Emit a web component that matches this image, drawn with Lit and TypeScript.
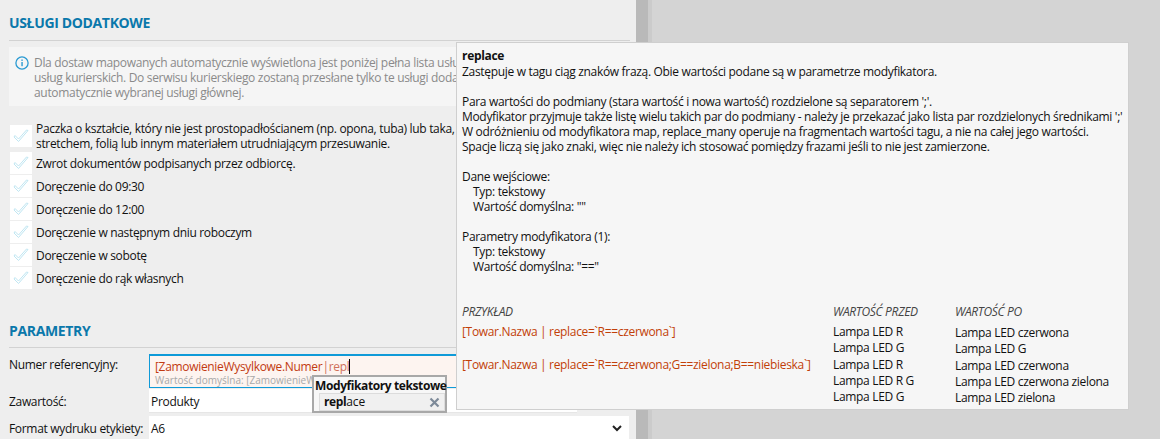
import { LitElement, html, css } from "lit";
import { customElement } from "lit/decorators.js";

const services = [
  "Zwrot dokumentów podpisanych przez odbiorcę.",
  "Doręczenie do 09:30",
  "Doręczenie do 12:00",
  "Doręczenie w następnym dniu roboczym",
  "Doręczenie w sobotę",
  "Doręczenie do rąk własnych",
];

const check = html`<span class="box"><svg width="16" height="14" viewBox="0 0 16 14"><path d="M1 8 L5.5 12.5 L15 1.5 L13.5 1 L5.5 10 L2 6.5 Z" fill="#fff" stroke="#bfe6f2" stroke-width="1"/></svg></span>`;

@customElement("app-root")
export class AppRoot extends LitElement {
  static styles = css`
    :host { display: flex; position: relative; width: 1160px; height: 439px; overflow: hidden; background: #d4d4d4;
      font-family: "Open Sans", "Noto Sans", sans-serif; font-size: 12px; color: #111; letter-spacing: -0.32px; }
    .panel { width: 636px; height: 439px; box-sizing: border-box; background: #eeeeee; padding: 13px 6px 0 9px; flex: none; overflow: hidden; }
    .gutter { width: 12px; background: #b9b9b9; border-right: 4px solid #cbcbcb; flex: none; }
    h2 { margin: 0; font-size: 14px; line-height: 19px; font-weight: 700; color: #0a78ab; letter-spacing: -0.35px; }
    .rule { height: 1px; background: #d2d2d2; margin-top: 8px; }
    .info { margin-top: 6px; height: 59px; box-sizing: border-box; background: #f5f5f5; padding: 8px 0 0 6px; display: flex; gap: 5px; color: #8a8a8a; line-height: 15px; white-space: nowrap; overflow: hidden; }
    .info svg { flex: none; margin-top: 1px; }
    .list { margin-top: 15px; display: flex; flex-direction: column; gap: 1px; }
    .row { display: flex; align-items: center; gap: 4px; min-height: 22px; line-height: 15px; white-space: nowrap; }
    .box { width: 22px; height: 22px; background: #fff; flex: none; display: flex; align-items: center; justify-content: center; margin-left: 1px; }
    .params { margin-top: 32px; }
    .params .rule { margin-top: 7px; }
    .field { display: grid; grid-template-columns: 140px 1fr; align-items: center; }
    .top { align-items: start; margin-top: 6px; }
    .lab { line-height: 22px; }
    .input { position: relative; height: 34px; box-sizing: border-box; border: 1px solid #0f9ad8; border-width: 2px 1px 1px 1px; background: #fdf4f0; padding: 2px 0 0 5px; line-height: 17px; color: #c23a10; white-space: nowrap; overflow: hidden; }
    .input i { font-style: normal; color: #d0705a; }
    .caret { display: inline-block; width: 1px; height: 15px; background: #000; vertical-align: -3px; }
    .hint { font-size: 10px; line-height: 11px; color: #a8a8a8; letter-spacing: 0; }
    .plain { height: 24px; box-sizing: border-box; background: #fff; padding: 2px 0 0 2px; display: flex; align-items: center; justify-content: space-between; border-bottom: 1px solid #e6e6e6; }
    .short { margin-top: 1px; }
    .short .plain { width: 428px; }
    .short > div:first-child, .fmt > div:first-child { padding-top: 1px; }
    .fmt { margin-top: 3px; }
    .fmt .plain { margin-right: 1px; }
    .plain svg { margin-right: 7px; }
    .dropdown { position: absolute; left: 312px; top: 375px; width: 135px; height: 38px; box-sizing: border-box; border: 2px solid #a8a8a8; background: #f7f7f7; padding-top: 1px; }
    .dropdown b { display: block; font-size: 12px; letter-spacing: -0.4px; line-height: 15px; color: #111; white-space: nowrap; margin-left: 1px; }
    .match { margin: 0 0 0 5px; width: 126px; height: 18px; box-sizing: border-box; background: #f0f0f0; border: 1px solid #dcdcdc; padding: 0 4px 0 4px; display: flex; justify-content: space-between; align-items: center; line-height: 16px; letter-spacing: -0.1px; }
    .match b { display: inline; margin: 0; }
    .tip { position: absolute; left: 456px; top: 42px; width: 673px; height: 368px; box-sizing: border-box; background: #f6f6f6; border: 1px solid #cfcfcf; padding: 0 5px; line-height: 15px; color: #111; white-space: nowrap; letter-spacing: -0.32px; }
    .tip .name { font-weight: 700; margin: 5px 0 1px; }
    .tip p { margin: 0; min-height: 15px; }
    .tip .ind { padding-left: 11px; }
    .ex { margin-top: 30px; display: grid; grid-template-columns: 371px 122px 1fr; }
    .ex .head { font-style: italic; color: #444; }
    .ex .tag { color: #c23f08; }
    .col { display: flex; flex-direction: column; line-height: 16px; }
    .gap { height: 17px; }
    .head { height: 20px; }
    .sp { margin-top: 1px; }
    .po .head { height: 21px; }
  `;

  render() {
    return html`
      <div class="panel">
        <h2>USŁUGI DODATKOWE</h2>
        <div class="rule"></div>
        <div class="info">
          <svg width="14" height="14" viewBox="0 0 14 14"><circle cx="7" cy="7" r="6.1" fill="none" stroke="#2a9ad2" stroke-width="1.3"/><rect x="6.35" y="6" width="1.4" height="4.2" fill="#2a9ad2"/><rect x="6.35" y="3.5" width="1.4" height="1.4" fill="#2a9ad2"/></svg>
          <div>Dla dostaw mapowanych automatycznie wyświetlona jest poniżej pełna lista usług<br>usług kurierskich. Do serwisu kurierskiego zostaną przesłane tylko te usługi dodatkowe<br>automatycznie wybranej usługi głównej.</div>
        </div>
        <div class="list">
          <div class="row">${check}<div>Paczka o kształcie, który nie jest prostopadłościanem (np. opona, tuba) lub taka,<br>stretchem, folią lub innym materiałem utrudniającym przesuwanie.</div></div>
          ${services.map((s) => html`<div class="row">${check}<div>${s}</div></div>`)}
        </div>
        <div class="params">
          <h2>PARAMETRY</h2>
          <div class="rule"></div>
          <div class="field top">
            <div class="lab">Numer referencyjny:</div>
            <div class="input">[ZamowienieWysylkowe.Numer<i>|repl</i><span class="caret"></span><div class="hint">Wartość domyślna: [ZamowienieWysylkowe.Numer] ==</div></div>
          </div>
          <div class="field short">
            <div>Zawartość:</div>
            <div class="plain">Produkty</div>
          </div>
          <div class="field fmt">
            <div>Format wydruku etykiety:</div>
            <div class="plain">A6<svg width="10" height="7" viewBox="0 0 10 7"><path d="M1 1 L5 5 L9 1" fill="none" stroke="#222" stroke-width="2"/></svg></div>
          </div>
        </div>
      </div>
      <div class="gutter"></div>
      <div class="tip">
        <p class="name">replace</p>
        <p>Zastępuje w tagu ciąg znaków frazą. Obie wartości podane są w parametrze modyfikatora.</p>
        <p></p>
        <p>Para wartości do podmiany (stara wartość i nowa wartość) rozdzielone są separatorem ';'.</p>
        <p>Modyfikator przyjmuje także listę wielu takich par do podmiany - należy je przekazać jako lista par rozdzielonych średnikami ';'</p>
        <p>W odróżnieniu od modyfikatora map, replace_many operuje na fragmentach wartości tagu, a nie na całej jego wartości.</p>
        <p>Spacje liczą się jako znaki, więc nie należy ich stosować pomiędzy frazami jeśli to nie jest zamierzone.</p>
        <p></p>
        <p>Dane wejściowe:</p>
        <p class="ind">Typ: tekstowy</p>
        <p class="ind">Wartość domyślna: ""</p>
        <p></p>
        <p>Parametry modyfikatora (1):</p>
        <p class="ind">Typ: tekstowy</p>
        <p class="ind">Wartość domyślna: "=="</p>
        <div class="ex">
          <div class="col">
            <div class="head">PRZYKŁAD</div>
            <div class="tag">[Towar.Nazwa | replace=\`R==czerwona\`]</div>
            <div class="gap"></div>
            <div class="tag">[Towar.Nazwa | replace=\`R==czerwona;G==zielona;B==niebieska\`]</div>
          </div>
          <div class="col">
            <div class="head">WARTOŚĆ PRZED</div>
            <div>Lampa LED R</div><div>Lampa LED G</div><div class="sp">Lampa LED R</div><div>Lampa LED R G</div><div>Lampa LED G</div>
          </div>
          <div class="col po">
            <div class="head">WARTOŚĆ PO</div>
            <div>Lampa LED czerwona</div><div>Lampa LED G</div><div class="sp">Lampa LED czerwona</div><div>Lampa LED czerwona zielona</div><div>Lampa LED zielona</div>
          </div>
        </div>
      </div>
      <div class="dropdown">
        <b>Modyfikatory tekstowe</b>
        <div class="match"><span><b>repl</b>ace</span>
          <svg width="11" height="11" viewBox="0 0 11 11"><path d="M1.5 1.5 L9.5 9.5 M9.5 1.5 L1.5 9.5" stroke="#7d8a99" stroke-width="2.2"/></svg></div>
      </div>
    `;
  }
}
